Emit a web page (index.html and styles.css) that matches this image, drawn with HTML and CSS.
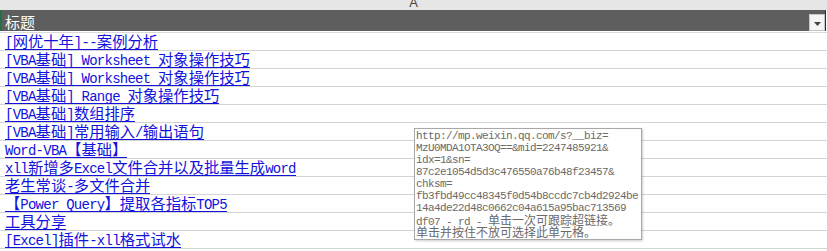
FILE: index.html
```html
<!DOCTYPE html>
<html lang="zh-CN">
<head>
<meta charset="utf-8">
<title>标题</title>
<link rel="stylesheet" href="styles.css">
</head>
<body>
<div class="sheet">
  <div class="colhead"><span class="colname">A</span></div>
  <div class="hdr">
    <span class="title">标题</span>
    <span class="filter"><svg width="7" height="4" viewBox="0 0 7 4"><path d="M0 0H7L3.5 4Z" fill="#444"/></svg></span>
  </div>
  <div class="sep"></div>
  <div class="rows">
    <div class="row"><a class="lnk" href="#"><span class="en">[</span>网优十年<span class="en">]--</span>案例分析</a></div>
    <div class="row"><a class="lnk" href="#"><span class="en">[VBA</span>基础<span class="en">] Worksheet </span>对象操作技巧</a></div>
    <div class="row"><a class="lnk" href="#"><span class="en">[VBA</span>基础<span class="en">] Worksheet </span>对象操作技巧</a></div>
    <div class="row"><a class="lnk" href="#"><span class="en">[VBA</span>基础<span class="en">] Range </span>对象操作技巧</a></div>
    <div class="row"><a class="lnk" href="#"><span class="en">[VBA</span>基础<span class="en">]</span>数组排序</a></div>
    <div class="row"><a class="lnk" href="#"><span class="en">[VBA</span>基础<span class="en">]</span>常用输入<span class="en">/</span>输出语句</a></div>
    <div class="row"><a class="lnk" href="#"><span class="en">Word-VBA</span>【基础】</a></div>
    <div class="row"><a class="lnk" href="#"><span class="en">xll</span>新增多<span class="en">Excel</span>文件合并以及批量生成<span class="en">word</span></a></div>
    <div class="row"><a class="lnk" href="#">老生常谈<span class="en">-</span>多文件合并</a></div>
    <div class="row"><a class="lnk" href="#">【<span class="en">Power Query</span>】提取各指标<span class="en">TOP5</span></a></div>
    <div class="row"><a class="lnk" href="#">工具分享</a></div>
    <div class="row"><a class="lnk" href="#"><span class="en">[Excel]</span>插件<span class="en">-xll</span>格式试水</a></div>
  </div>
  <div class="tip">
    <div class="tl">http://mp.weixin.qq.com/s?__biz=</div>
    <div class="tl">MzU0MDA1OTA3OQ==&amp;mid=2247485921&amp;</div>
    <div class="tl">idx=1&amp;sn=</div>
    <div class="tl">87c2e1054d5d3c476550a76b48f23457&amp;</div>
    <div class="tl">chksm=</div>
    <div class="tl">fb3fbd49cc48345f0d54b8ccdc7cb4d2924be</div>
    <div class="tl">14a4de22d48c0662c04a615a95bac713569</div>
    <div class="tl">df07 - rd - <span class="cj">单击一次可跟踪超链接。</span></div>
    <div class="tl"><span class="cj">单击并按住不放可选择此单元格。</span></div>
  </div>
</div>
</body>
</html>
```
FILE: styles.css
```css
html, body {
  margin: 0;
  padding: 0;
  background: #ffffff;
}
body {
  width: 827px;
  height: 251px;
  overflow: hidden;
  font-family: "Noto Sans CJK SC", sans-serif;
}
.sheet {
  position: relative;
  width: 827px;
  height: 251px;
  overflow: hidden;
}
.colhead {
  height: 10px;
  background: #e6e6e6;
  display: flex;
  justify-content: center;
  align-items: flex-end;
  overflow: hidden;
}
.colname {
  font-family: "Liberation Sans", sans-serif;
  font-size: 13px;
  line-height: 13px;
  color: #444444;
  margin-bottom: 1px;
}
.hdr {
  width: 826px;
  height: 21px;
  box-sizing: border-box;
  background: #5e5e5e;
  border-left: 2px solid #217346;
  border-right: 1px solid #2e2e2e;
  display: flex;
  justify-content: space-between;
  align-items: stretch;
}
.title {
  color: #ffffff;
  font-size: 15px;
  line-height: 21px;
  padding-left: 3px;
  padding-top: 1px;
}
.filter {
  align-self: flex-end;
  width: 16px;
  height: 17px;
  box-sizing: border-box;
  background: #f4f4f4;
  border: 1px solid #c6c6c6;
  display: flex;
  align-items: center;
  justify-content: center;
  padding-top: 2px;
}
.filter svg {
  display: block;
}
.sep {
  height: 1px;
  background: #ffffff;
  border-bottom: 1px solid #dadada;
}
.row {
  height: 18px;
  box-sizing: border-box;
  border-bottom: 1px solid #d4d4d4;
  display: flex;
  align-items: flex-end;
  padding-left: 5px;
  overflow: visible;
}
.lnk {
  display: block;
  height: 15px;
  box-sizing: border-box;
  color: #1212dc;
  text-decoration: none;
  border-bottom: 1px solid #1212dc;
  font-size: 15.3px;
  line-height: 11px;
  white-space: nowrap;
}
.en {
  font-family: "Liberation Mono", monospace;
  font-size: 14px;
  line-height: 11px;
  letter-spacing: -0.75px;
  vertical-align: baseline;
}
.tip {
  position: absolute;
  left: 414px;
  top: 128px;
  width: 228px;
  height: 112px;
  box-sizing: border-box;
  background: #ffffff;
  border: 1px solid #a8a8a8;
  box-shadow: 1px 1px 2px rgba(0, 0, 0, 0.2);
  padding: 1px 1px 0 1px;
  color: #6a6a6a;
  font-family: "Liberation Mono", monospace;
  font-size: 11px;
  letter-spacing: -0.6px;
  line-height: 12px;
}
.tl {
  white-space: nowrap;
  height: 12px;
}
.cj {
  font-family: "Noto Sans CJK SC", sans-serif;
  font-size: 12px;
  letter-spacing: 0;
}
```
